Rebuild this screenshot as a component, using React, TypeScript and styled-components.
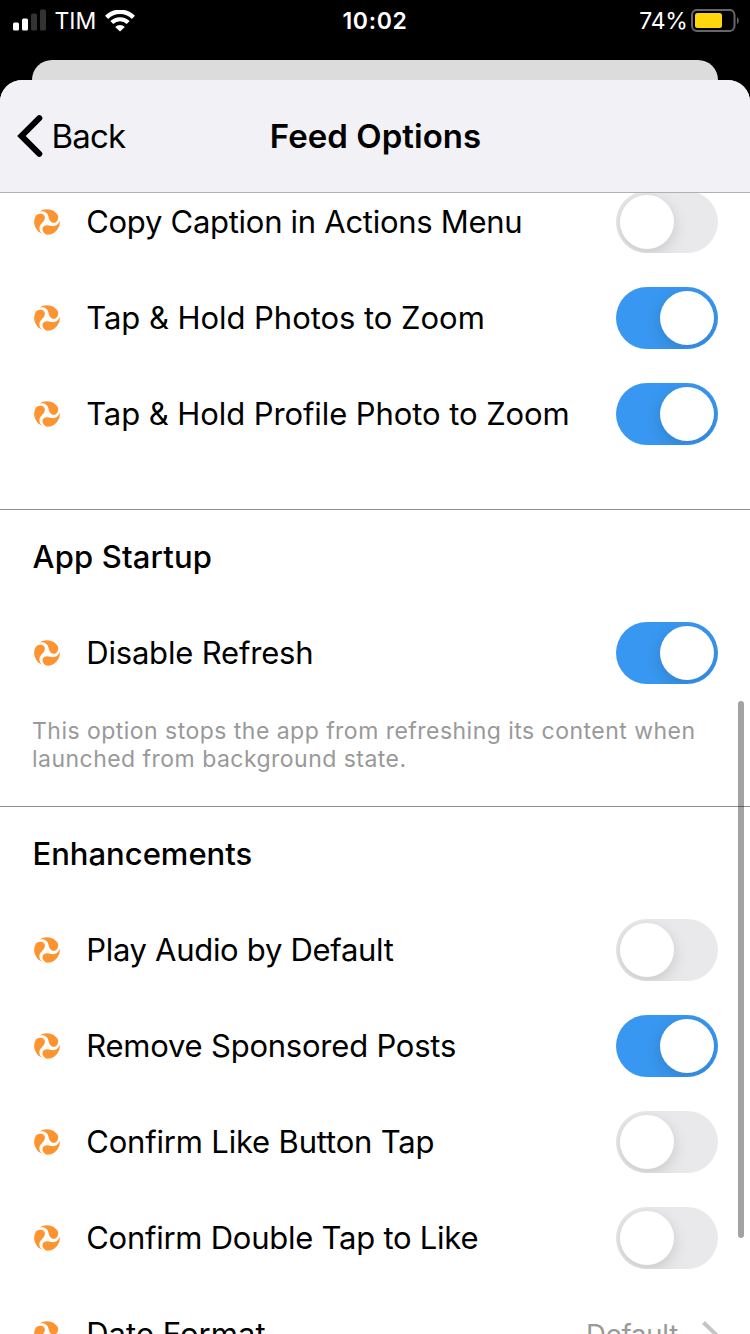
import React from "react";
import styled, { createGlobalStyle } from "styled-components";

const GlobalStyle = createGlobalStyle`
  * { box-sizing: border-box; }
  html, body { margin: 0; background: #000; }
  body { width: 750px; height: 1334px; overflow: hidden; font-family: Inter, "Liberation Sans", sans-serif; color: #000; }
`;

const Screen = styled.div`
  display: flex;
  flex-direction: column;
  width: 750px;
  height: 1334px;
  overflow: hidden;
  background: #000;
`;

const StatusBar = styled.div`
  display: grid;
  grid-template-columns: 1fr auto 1fr;
  align-items: center;
  flex: none;
  height: 40px;
  margin-bottom: 20px;
  padding: 0 11px 0 13px;
  color: #fff;
`;

const StatusGroup = styled.div<{ $end?: boolean }>`
  display: flex;
  align-items: center;
  justify-content: ${(p) => (p.$end ? "flex-end" : "flex-start")};
`;

const StatusText = styled.span<{ $bold?: boolean; $spacing?: number }>`
  font-size: 23px;
  line-height: 40px;
  padding-top: 1px;
  font-weight: ${(p) => (p.$bold ? 600 : 400)};
  letter-spacing: ${(p) => p.$spacing ?? 0}px;
`;

const Clock = styled(StatusText)`
  margin-right: 2px;
`;

const Carrier = styled(StatusText)`
  margin: 0 9px 0 8.5px;
`;

const Percentage = styled(StatusText)`
  margin-right: 3.5px;
`;

const PreviousSheet = styled.div`
  flex: none;
  height: 20px;
  margin: 0 32px;
  border-radius: 20px 20px 0 0;
  background: #dcdcdc;
`;

const Sheet = styled.main`
  position: relative;
  display: flex;
  flex-direction: column;
  flex: 1;
  min-height: 0;
  overflow: hidden;
  border-radius: 22px 22px 0 0;
  background: #fff;
`;

const NavBar = styled.header`
  display: grid;
  grid-template-columns: 1fr auto 1fr;
  align-items: center;
  flex: none;
  height: 113px;
  padding: 0 17px;
  border-bottom: 1px solid #b0afb3;
  background: #f2f1f6;
`;

const BackButton = styled.button`
  display: flex;
  align-items: center;
  gap: 8.5px;
  padding: 0;
  border: 0;
  background: none;
  color: #000;
  font: 400 33px/40px Inter, sans-serif;
  letter-spacing: -0.8px;
`;

const Title = styled.h1`
  margin: 0 0 0 1px;
  font-size: 33px;
  line-height: 40px;
  font-weight: 600;
  letter-spacing: 0.04px;
`;

const Content = styled.div`
  flex: 1;
  min-height: 0;
  overflow: hidden;
`;

const Section = styled.section<{ $first?: boolean }>`
  margin-top: ${(p) => (p.$first ? "-19px" : "0")};
  padding-bottom: ${(p) => (p.$first ? "47px" : "0")};
`;

const SectionTitle = styled.h2<{ $spacing: number }>`
  height: 96px;
  margin: 0;
  padding: 0 32.5px;
  border-top: 1px solid #8f8f8f;
  font-size: 31px;
  line-height: 94px;
  font-weight: 500;
  letter-spacing: ${(p) => p.$spacing}px;
`;

const Row = styled.div`
  display: flex;
  align-items: center;
  height: 96px;
  padding: 0 32px 0 34px;
`;

const RowLabel = styled.span<{ $spacing: number }>`
  flex: 1;
  margin-left: 26.2px;
  font-size: 31px;
  line-height: 40px;
  white-space: nowrap;
  letter-spacing: ${(p) => p.$spacing}px;
`;

const RowValue = styled.span`
  margin-right: 24px;
  color: #999;
  font-size: 27.5px;
  line-height: 40px;
  letter-spacing: -0.2px;
`;

const Note = styled.p`
  height: 105px;
  margin: 0;
  padding: 16px 32px 0;
  color: #999;
  font-size: 23px;
  line-height: 28px;
  letter-spacing: 0.47px;
`;

const Toggle = styled.span<{ $on: boolean }>`
  display: flex;
  justify-content: ${(p) => (p.$on ? "flex-end" : "flex-start")};
  flex: none;
  width: 102px;
  height: 62px;
  padding: 4px;
  border-radius: 31px;
  overflow: hidden;
  background: ${(p) => (p.$on ? "#3897f0" : "#e9e9eb")};
`;

const Knob = styled.span`
  width: 54px;
  height: 54px;
  border-radius: 50%;
  background: #fff;
  box-shadow: 0 5px 16px rgba(0, 0, 0, 0.14);
`;

const ScrollThumb = styled.div`
  position: absolute;
  top: 621px;
  right: 6px;
  width: 6px;
  height: 537px;
  border-radius: 3px;
  background: rgba(0, 0, 0, 0.36);
`;

const SignalIcon = () => (
  <svg width="33" height="23" viewBox="0 0 33 23">
    <rect x="0" y="13.5" width="6" height="8" rx="1.5" fill="#fff" />
    <rect x="9" y="9.5" width="6" height="12" rx="1.5" fill="#fff" />
    <rect x="18" y="4.5" width="6" height="17" rx="1.5" fill="#333" />
    <rect x="27" y="0.5" width="6" height="21" rx="1.5" fill="#333" />
  </svg>
);

const WifiIcon = () => (
  <svg width="30" height="22" viewBox="0 0 30 22" fill="none" stroke="#fff">
    <path d="M1.6 7.4A18.8 18.8 0 0 1 28.4 7.4" strokeWidth="4.4" />
    <path d="M6.8 12.6A11.7 11.7 0 0 1 23.2 12.6" strokeWidth="4.2" />
    <path d="M15 21.6L10.2 17A6.8 6.8 0 0 1 19.8 17Z" fill="#fff" stroke="none" />
  </svg>
);

const BatteryIcon = () => (
  <svg width="48" height="24" viewBox="0 0 48 24">
    <rect x="1" y="0.9" width="42.5" height="21" rx="5" fill="none" stroke="#666" strokeWidth="2" />
    <rect x="4" y="4" width="27" height="15" rx="2.5" fill="#ffd60a" />
    <path d="M46 8Q47.8 9 47.8 11.5T46 15Z" fill="#666" />
  </svg>
);

const BackIcon = () => (
  <svg width="26" height="42" viewBox="0 0 26 42">
    <path d="M22.3 3.2L4.4 21L22.3 38.8" fill="none" stroke="#000" strokeWidth="6" strokeLinecap="round" strokeLinejoin="miter" />
  </svg>
);

const SwirlIcon = () => (
  <svg width="26" height="26" viewBox="0 0 26 26" fill="#fc9432">
    {[0, 120, 240].map((angle) => (
      <path
        key={angle}
        transform={`rotate(${angle} 13 13)`}
        d="M7.8 24.8A12.9 12.9 0 0 1 1.8 6.8C4.5 4.1 8.8 4.3 10.3 6.6C11.6 9 10.6 11.8 8 14C5.2 16.6 4 20.4 7.8 24.8Z"
      />
    ))}
  </svg>
);

const DisclosureIcon = () => (
  <svg width="16" height="26" viewBox="0 0 16 26">
    <path d="M1.5 1.5L13.5 13L1.5 24.5" fill="none" stroke="#c4c4c6" strokeWidth="4" />
  </svg>
);

interface OptionProps {
  label: string;
  on?: boolean;
  value?: string;
  spacing?: number;
}

const Option = ({ label, on = false, value, spacing = 0 }: OptionProps) => (
  <Row>
    <SwirlIcon />
    <RowLabel $spacing={spacing}>{label}</RowLabel>
    {value ? (
      <>
        <RowValue>{value}</RowValue>
        <DisclosureIcon />
      </>
    ) : (
      <Toggle $on={on} role="switch" aria-checked={on}>
        <Knob />
      </Toggle>
    )}
  </Row>
);

export default function App() {
  return (
    <Screen>
      <GlobalStyle />
      <StatusBar>
        <StatusGroup>
          <SignalIcon />
          <Carrier>TIM</Carrier>
          <WifiIcon />
        </StatusGroup>
        <Clock $bold $spacing={0.7}>10:02</Clock>
        <StatusGroup $end>
          <Percentage $spacing={-0.3}>74%</Percentage>
          <BatteryIcon />
        </StatusGroup>
      </StatusBar>
      <PreviousSheet />
      <Sheet>
        <NavBar>
          <BackButton>
            <BackIcon />
            Back
          </BackButton>
          <Title>Feed Options</Title>
        </NavBar>
        <Content>
          <Section $first>
            <Option label="Copy Caption in Actions Menu" spacing={-0.28} />
            <Option label="Tap & Hold Photos to Zoom" on spacing={-0.04} />
            <Option label="Tap & Hold Profile Photo to Zoom" on spacing={-0.08} />
          </Section>
          <Section>
            <SectionTitle $spacing={0.17}>App Startup</SectionTitle>
            <Option label="Disable Refresh" on spacing={-0.18} />
            <Note>
              This option stops the app from refreshing its content when launched from background state.
            </Note>
          </Section>
          <Section>
            <SectionTitle $spacing={0}>Enhancements</SectionTitle>
            <Option label="Play Audio by Default" spacing={-0.3} />
            <Option label="Remove Sponsored Posts" on spacing={-0.22} />
            <Option label="Confirm Like Button Tap" spacing={-0.18} />
            <Option label="Confirm Double Tap to Like" spacing={-0.25} />
            <Option label="Date Format" value="Default" spacing={0.05} />
          </Section>
        </Content>
        <ScrollThumb />
      </Sheet>
    </Screen>
  );
}
